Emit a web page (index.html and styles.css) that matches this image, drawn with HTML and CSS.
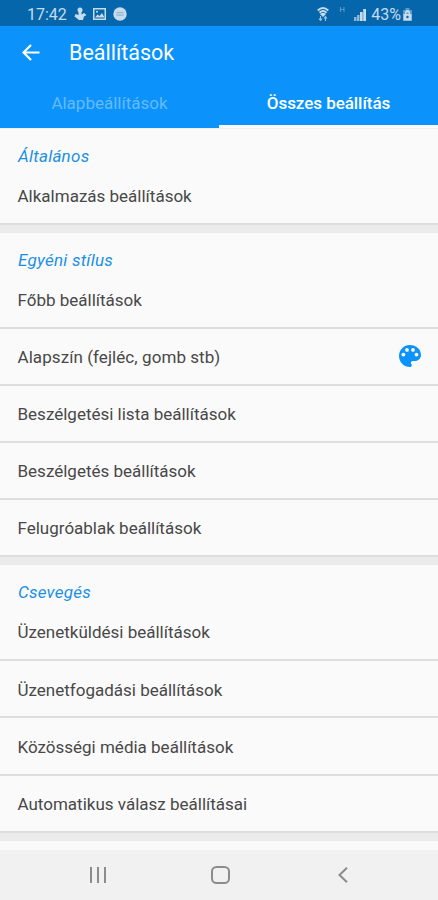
FILE: index.html
```html
<!DOCTYPE html>
<html lang="hu">
<head>
<meta charset="utf-8">
<meta name="viewport" content="width=device-width, initial-scale=1">
<title>Beállítások</title>
<link rel="stylesheet" href="styles.css">
</head>
<body>
<div class="screen">
  <div class="status">
    <span class="clock">17:42</span>
    <svg class="st-touch" width="13" height="14" viewBox="0 0 13 14"><circle cx="6" cy="3" r="2.500"/><path d="M4.600 3h2.900v4.500l2.500-1.500 2.500 2-2.500 1.500L9 13H5L.5 9.500 1.500 7l3 1z"/></svg>
    <svg class="st-image" width="13" height="12" viewBox="0 0 13 12"><path fill-rule="evenodd" d="M0 0h13v12H0zM1.500 1.500v9h10v-9z"/><path d="M2 9.500l2.500-3 2 1.500L9 5l2.500 4.500z"/><circle cx="4" cy="3.800" r="1"/></svg>
    <svg class="st-chat" width="14" height="14" viewBox="0 0 14 14"><circle cx="7" cy="7" r="6.700"/><path d="M3.500 5.700h7M3.500 8.100h7" stroke="#8db4d3" stroke-width="1.200"/></svg>
    <span class="spacer"></span>
    <svg class="st-wifi" width="12" height="15" viewBox="0 0 12 15"><path d="M.7 3.500Q6-1.500 11.300 3.500M2.500 5.700Q6 2.500 9.500 5.700" fill="none" stroke="#c6dbeb" stroke-width="1.900"/><path d="M3 7Q6 4.300 9 7L6 10z"/><path d="M3.500 9v4M2 11.700l1.500 1.800L5 11.700M8.500 14v-4M7 11.500L8.500 9.700l1.500 1.800" fill="none" stroke="#9fc2dc" stroke-width="1.100"/></svg>
    <svg class="st-h" width="5" height="6" viewBox="0 0 5 6"><path d="M.5 0v5M4 0v5M.5 2.500H4" fill="none" stroke="#5c98c5"/></svg>
    <svg class="st-signal" width="13" height="13" viewBox="0 0 13 13"><path d="M0 9h2.500v4H0zM3 7h2.500v6H3z" opacity=".7"/><path d="M6 4h2.700v9H6zM9.200 1H12v12H9.200z"/></svg>
    <span class="percent">43%</span>
    <svg class="st-battery" width="9" height="13" viewBox="0 0 9 13"><path d="M2.500 0h4v2H9v11H0V2h2.500z" opacity=".45"/><path d="M.5 6h8v6.500h-8zM2 6V4.500a2.500 2.500 0 0 1 5 0V6H5.500V4.500h-2V6z"/><circle cx="4.500" cy="9" r="1.200" fill="#0666ab"/></svg>
  </div>
  <header class="header">
    <div class="bar">
      <svg class="back" width="18" height="17" viewBox="0 0 18 17"><path d="M17.500 8.500H2M9 1L1.500 8.500 9 16" fill="none" stroke="#fff" stroke-width="2.200"/></svg>
      <h1 class="title">Beállítások</h1>
    </div>
    <nav class="tabs">
      <div class="tab">Alapbeállítások</div>
      <div class="tab active">Összes beállítás</div>
    </nav>
  </header>
  <main class="content">
    <section class="group first">
      <h2>Általános</h2>
      <div class="row short">Alkalmazás beállítások</div>
    </section>
    <section class="group">
      <h2>Egyéni stílus</h2>
      <div class="row short">Főbb beállítások</div>
      <div class="row"><span class="wide">Alapszín (fejléc, gomb stb)</span>
        <svg class="palette" width="22" height="22" viewBox="0 0 22 22"><path fill="#0b93fb" d="M11 0C4.900 0 0 4.900 0 11s4.900 11 11 11c1 0 1.800-.8 1.800-1.800 0-.5-.2-.9-.5-1.200-.3-.3-.4-.8-.4-1.200 0-1 .8-1.800 1.800-1.800h2.200c3.400 0 6.100-2.800 6.100-6.100C22 4.400 17.100 0 11 0z"/><g fill="#fafafa"><circle cx="4.400" cy="9.600" r="1.900"/><circle cx="8" cy="4.900" r="1.900"/><circle cx="14" cy="4.900" r="1.900"/><circle cx="17.500" cy="9.600" r="1.900"/></g></svg>
      </div>
      <div class="row">Beszélgetési lista beállítások</div>
      <div class="row">Beszélgetés beállítások</div>
      <div class="row">Felugróablak beállítások</div>
    </section>
    <section class="group">
      <h2>Csevegés</h2>
      <div class="row short">Üzenetküldési beállítások</div>
      <div class="row">Üzenetfogadási beállítások</div>
      <div class="row">Közösségi média beállítások</div>
      <div class="row">Automatikus válasz beállításai</div>
    </section>
  </main>
  <footer class="navbar">
    <div><svg width="18" height="16" viewBox="0 0 18 16"><path d="M2 0v16M9 0v16M16 0v16"/></svg></div>
    <div><svg width="19" height="18" viewBox="0 0 19 18"><rect x="1" y="1" width="17" height="16" rx="4.500"/></svg></div>
    <div><svg width="10" height="16" viewBox="0 0 10 16"><path d="M9 .7L1.500 8 9 15.300"/></svg></div>
  </footer>
</div>
</body>
</html>
```
FILE: styles.css
```css
* { box-sizing: border-box; }
body {
  margin: 0;
  font-family: Roboto, "Liberation Sans", sans-serif;
  background: #fafafa;
}
.screen {
  width: 438px;
  height: 900px;
  display: flex;
  flex-direction: column;
  overflow: hidden;
}
svg { display: block; flex: none; }
.status {
  height: 26px;
  flex: none;
  display: flex;
  align-items: center;
  padding: 2px 26px 0 27px;
  background: #0666ab;
  color: #c6dbeb;
  font-size: 16px;
}
.status svg { fill: #c6dbeb; }
.clock { width: 47px; }
.st-image { margin-left: 6px; }
.st-chat { margin-left: 7px; }
.spacer { flex: 1; }
.st-wifi { margin-right: 1px; }
.st-h { margin: -8px 9px 0 10px; }
.percent { margin: 0 2px 0 4px; }
.header {
  height: 102px;
  flex: none;
  display: flex;
  flex-direction: column;
  background: #0b93fb;
  color: #fff;
}
.bar {
  height: 52px;
  flex: none;
  display: flex;
  align-items: center;
  padding-left: 22px;
}
.title {
  margin: 2px 0 0 29px;
  font-size: 21.500px;
  line-height: 26px;
  font-weight: 400;
}
.tabs {
  height: 50px;
  display: grid;
  grid-template-columns: 1fr 1fr;
}
.tab {
  height: 50px;
  line-height: 51px;
  text-align: center;
  font-size: 17px;
  color: #65bafb;
}
.active {
  color: #fff;
  font-weight: 500;
  letter-spacing: -0.05px;
  border-bottom: 3px solid #fafafa;
}
.content {
  height: 722px;
  flex: none;
  border-top: 1px solid #f0f0f0;
}
.group { border-bottom: 8px solid #ebebeb; }
.group h2 {
  margin: 0;
  height: 39px;
  padding: 16px 18px 0;
  font-size: 17px;
  line-height: 22px;
  letter-spacing: 0.25px;
  font-weight: 400;
  font-style: italic;
  color: #1a90e5;
}
.row {
  height: 57.200px;
  display: flex;
  align-items: center;
  justify-content: space-between;
  padding: 1.500px 17px 0 17.500px;
  border-bottom: 2px solid #dedede;
  font-size: 17px;
  color: #484848;
}
.wide { letter-spacing: 0.07px; }
.palette { margin-top: -2px; }
.short { height: 57px; padding-top: 1px; }
.first h2 { height: 38.500px; }
.navbar {
  height: 50px;
  flex: none;
  display: flex;
  align-items: center;
  justify-content: center;
  padding-left: 2px;
  background: #f1f1f1;
}
.navbar div {
  width: 122.500px;
  display: flex;
  justify-content: center;
}
.navbar svg {
  fill: none;
  stroke: #8c8c8c;
  stroke-width: 2px;
}
```
